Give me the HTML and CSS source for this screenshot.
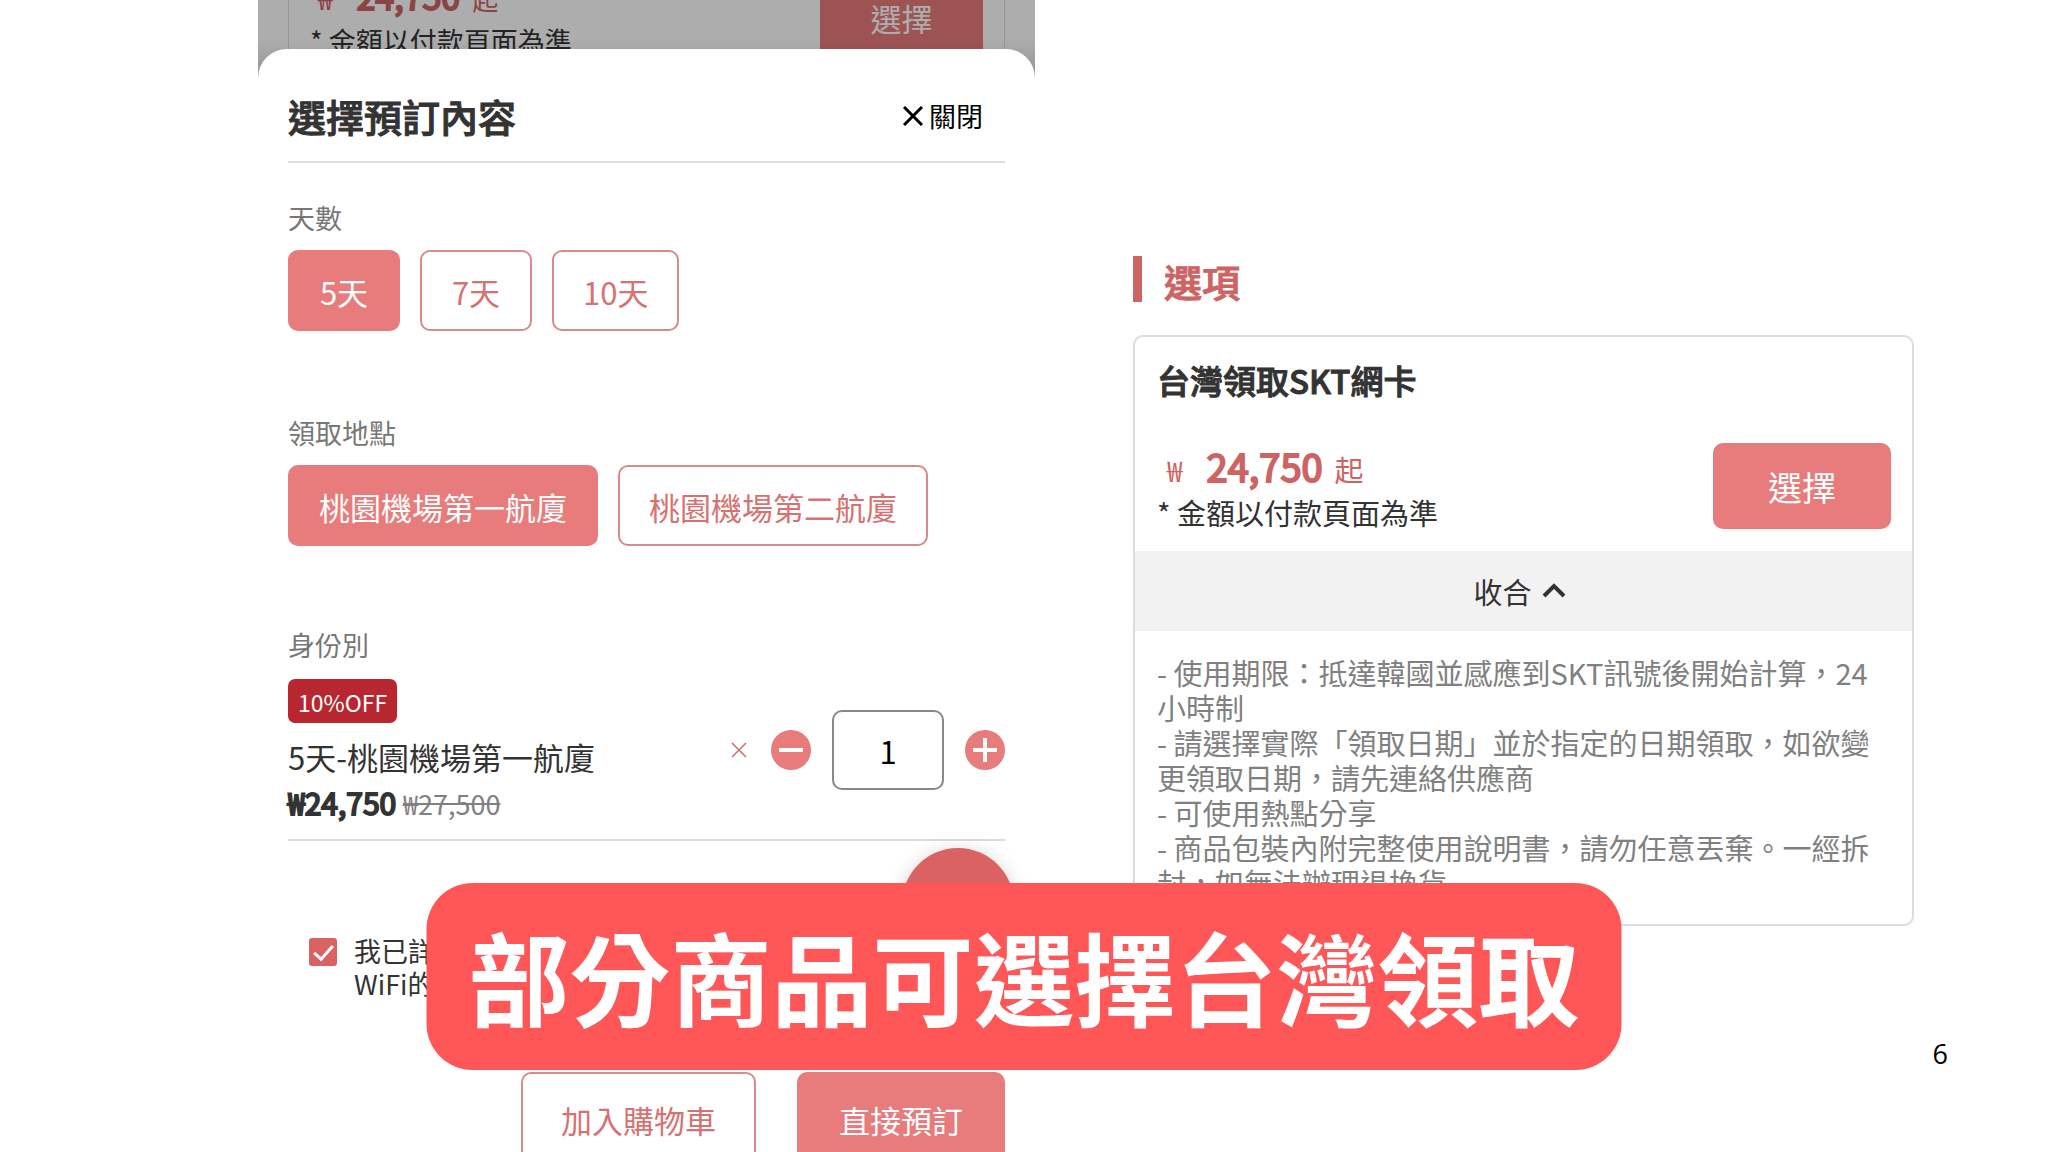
FILE: index.html
```html
<!DOCTYPE html>
<html lang="zh-Hant">
<head>
    <meta charset="UTF-8">
    <meta name="viewport" content="width=device-width, initial-scale=1.0">
    <title>部分商品可選擇台灣領取</title>
    <link rel="stylesheet" href="styles.css">
</head>
<body>

    <main class="slide">

        <!-- Left: booking sheet -->
        <section class="phone">
            <div class="backdrop">
                <div class="backdrop-card">
                    <div>
                        <p class="price small"><span class="won">₩</span><b>24,750</b><span>起</span></p>
                        <p class="note small">* 金額以付款頁面為準</p>
                    </div>
                    <button class="backdrop-select" type="button">選擇</button>
                </div>
            </div>

            <div class="sheet">
                <header class="sheet-header">
                    <h2>選擇預訂內容</h2>
                    <button class="close" type="button">
                        <svg width="20" height="20" viewBox="0 0 20 20"><path d="M1 1L19 19M19 1L1 19" stroke="#000" stroke-width="3"/></svg>
                        關閉
                    </button>
                </header>

                <div class="group">
                    <h3>天數</h3>
                    <div class="options">
                        <button class="option selected" type="button">5天</button>
                        <button class="option" type="button">7天</button>
                        <button class="option" type="button">10天</button>
                    </div>
                </div>

                <div class="group">
                    <h3>領取地點</h3>
                    <div class="options">
                        <button class="option selected" type="button">桃園機場第一航廈</button>
                        <button class="option" type="button">桃園機場第二航廈</button>
                    </div>
                </div>

                <div class="group products">
                    <h3>身份別</h3>
                    <div class="product">
                        <div>
                            <span class="badge">10%OFF</span>
                            <p class="product-name">5天-桃園機場第一航廈</p>
                            <p class="product-price"><b>₩24,750</b> <del>₩27,500</del></p>
                        </div>
                        <div class="stepper">
                            <svg class="times" width="16" height="16" viewBox="0 0 16 16"><path d="M1 1L15 15M15 1L1 15" stroke="#c87070" stroke-width="1.5"/></svg>
                            <button class="round" type="button" aria-label="減少">
                                <svg width="40" height="40" viewBox="0 0 40 40"><path d="M8 20H32" stroke="#fff" stroke-width="4"/></svg>
                            </button>
                            <input class="quantity" type="text" value="1" aria-label="數量">
                            <button class="round" type="button" aria-label="增加">
                                <svg width="40" height="40" viewBox="0 0 40 40"><path d="M8 20H32M20 8V32" stroke="#fff" stroke-width="4"/></svg>
                            </button>
                        </div>
                    </div>
                </div>

                <div class="agree">
                    <input type="checkbox" id="agree" checked>
                    <label for="agree">我已詳<br>WiFi的</label>
                </div>

                <div class="actions">
                    <button class="action" type="button">加入購物車</button>
                    <button class="action primary" type="button">直接預訂</button>
                </div>

                <div class="fab"></div>
            </div>
        </section>

        <!-- Right: option card -->
        <section class="plans">
            <h2 class="plans-title">選項</h2>
            <article class="card">
                <h3 class="card-title">台灣領取SKT網卡</h3>
                <div class="card-row">
                    <div>
                        <p class="price"><span class="won">₩</span><b>24,750</b><span>起</span></p>
                        <p class="note">* 金額以付款頁面為準</p>
                    </div>
                    <button class="select" type="button">選擇</button>
                </div>
                <button class="toggle" type="button">
                    收合
                    <svg width="24" height="16" viewBox="0 0 24 16"><path d="M2 13L12 3L22 13" fill="none" stroke="#333" stroke-width="4"/></svg>
                </button>
                <p class="details">
                    - 使用期限：抵達韓國並感應到SKT訊號後開始計算，24<br>
                    小時制<br>
                    - 請選擇實際「領取日期」並於指定的日期領取，如欲變<br>
                    更領取日期，請先連絡供應商<br>
                    - 可使用熱點分享<br>
                    - 商品包裝內附完整使用說明書，請勿任意丟棄。一經拆<br>
                    封，如無法辦理退換貨
                </p>
            </article>
        </section>

        <h1 class="banner">部分商品可選擇台灣領取</h1>
        <span class="page-number">6</span>
    </main>

</body>
</html>
```

FILE: styles.css
```css
* {
    box-sizing: border-box;
}
body {
    margin: 0;
    background-color: #fff;
    color: #333;
    font-family: "Noto Sans CJK TC", sans-serif;
}
h1, h2, h3, p {
    margin: 0;
}
button, input {
    margin: 0;
    padding: 0;
    border: none;
    background: none;
    color: inherit;
    font-family: inherit;
}
button {
    cursor: pointer;
    white-space: nowrap;
}
.slide {
    position: relative;
    display: grid;
    grid-template-columns: 258fr 777fr 98fr 781fr 134fr;
    align-items: start;
    height: 100vh;
    overflow: hidden;
}

/* Page behind the sheet */
.phone {
    grid-column: 2;
}
.backdrop {
    position: relative;
    height: 78px;
    padding: 0 30px;
    overflow: hidden;
}
.backdrop::after {
    content: "";
    position: absolute;
    inset: 0;
    background: linear-gradient(rgba(0, 0, 0, 0.32) 50%, rgba(0, 0, 0, 0.42));
}
.backdrop-card {
    display: flex;
    justify-content: space-between;
    align-items: flex-end;
    height: 64px;
    padding: 0 21px;
    border: 1px solid #ddd;
    border-top: none;
}
.backdrop-select {
    width: 163px;
    height: 92px;
    background-color: #e87b7b;
    color: #fff;
    font-size: 31px;
}

/* Prices, shared by both sides */
.price {
    display: flex;
    align-items: baseline;
    padding-left: 10px;
    color: #cd6464;
    font-size: 29px;
    line-height: 46px;
}
.price b {
    margin: 0 12px 0 24px;
    font-size: 38px;
    font-weight: 400;
    -webkit-text-stroke: 2px #cd6464;
}
.price .won {
    font-size: 28px;
}
.note {
    font-size: 29px;
    line-height: 38px;
}
.price.small {
    padding-left: 8px;
    font-size: 26px;
    line-height: 40px;
}
.price.small b {
    font-size: 34px;
}
.price.small .won {
    font-size: 26px;
}
.note.small {
    font-size: 27px;
    line-height: 44px;
}

/* Sheet */
.sheet {
    position: relative;
    margin-top: -29px;
    padding: 0 30px;
    border-radius: 29px 29px 0 0;
    background-color: #fff;
}
.sheet-header {
    display: flex;
    justify-content: space-between;
    align-items: center;
    height: 114px;
    padding: 21px 22px 0 0;
    border-bottom: 2px solid #ddd;
}
.sheet-header h2 {
    font-size: 38px;
    font-weight: 500;
    line-height: 56px;
    -webkit-text-stroke: 1px #333;
}
.close {
    display: flex;
    align-items: center;
    gap: 6px;
    color: #000;
    font-size: 27px;
    line-height: 40px;
}
.group {
    margin-top: 82px;
}
.sheet-header + .group {
    margin-top: 35px;
}
.group h3 {
    margin-bottom: 12px;
    color: #777;
    font-size: 27px;
    font-weight: 400;
    line-height: 40px;
}
.group.products {
    margin-top: 79px;
}
.products h3 {
    margin-bottom: 14px;
}
.options {
    display: flex;
    gap: 20px;
}
.option {
    min-width: 112px;
    height: 81px;
    padding: 2px 29px 0;
    border: 2px solid #d98a8a;
    border-radius: 10px;
    color: #d67272;
    font-size: 31px;
}
.option.selected {
    border-color: #e87b7b;
    background-color: #e87b7b;
    color: #fff;
}

.product {
    display: flex;
    justify-content: space-between;
    align-items: center;
    padding-bottom: 12px;
    border-bottom: 2px solid #ddd;
}
.badge {
    display: block;
    width: fit-content;
    margin-bottom: 12px;
    padding: 2px 10px 0;
    border-radius: 7px;
    background-color: #b8272f;
    color: #fff;
    font-size: 23px;
    line-height: 42px;
}
.product-name {
    font-size: 31px;
    line-height: 44px;
}
.product-price {
    font-size: 30px;
    line-height: 46px;
}
.product-price b {
    font-weight: 400;
    -webkit-text-stroke: 2px #333;
}
.product-price del {
    color: #808080;
    font-size: 27px;
}
.stepper {
    display: flex;
    align-items: center;
    gap: 21px;
    padding-bottom: 6px;
}
.times {
    margin-right: 3px;
}
.round {
    width: 40px;
    height: 40px;
    border-radius: 50%;
    background-color: #e87b7b;
}
.round svg {
    display: block;
}
.quantity {
    width: 112px;
    height: 80px;
    border: 2px solid #888;
    border-radius: 10px;
    color: #000;
    font-size: 31px;
    text-align: center;
}

.agree {
    display: flex;
    gap: 17px;
    margin-top: 93px;
    padding-left: 21px;
}
.agree input {
    appearance: none;
    width: 28px;
    height: 28px;
    margin-top: 4px;
    border-radius: 3px;
    background-color: #da6262;
}
.agree input:checked::before {
    content: "";
    display: block;
    width: 8px;
    height: 16px;
    margin: 3px auto;
    border: solid #fff;
    border-width: 0 3px 3px 0;
    transform: rotate(42deg);
}
.agree label {
    font-size: 27px;
    line-height: 33px;
}
.actions {
    display: flex;
    justify-content: flex-end;
    gap: 41px;
    margin-top: 72px;
}
.action {
    height: 92px;
    padding: 2px 38px 0;
    border: 2px solid #d98a8a;
    border-radius: 10px;
    color: #d67272;
    font-size: 31px;
}
.action.primary {
    padding: 2px 40px 0;
    border-color: #e87b7b;
    background-color: #e87b7b;
    color: #fff;
}
.fab {
    position: absolute;
    top: 799px;
    right: 21px;
    width: 112px;
    height: 112px;
    border-radius: 50%;
    background-color: #da6262;
    box-shadow: 0 4px 20px rgba(0, 0, 0, 0.2);
}

/* Option card */
.plans {
    grid-column: 4;
    padding-top: 256px;
}
.plans-title {
    padding: 3px 0 0 22px;
    border-left: 9px solid #cd6464;
    color: #cd6464;
    font-size: 38px;
    font-weight: 500;
    line-height: 43px;
    -webkit-text-stroke: 1px #cd6464;
}
.card {
    margin-top: 33px;
    border: 2px solid #ddd;
    border-radius: 10px;
    overflow: hidden;
}
.card-title {
    padding: 19px 22px 0;
    font-size: 33px;
    font-weight: 500;
    line-height: 48px;
    -webkit-text-stroke: 1px #333;
}
.card-row {
    display: flex;
    justify-content: space-between;
    align-items: flex-start;
    margin-top: 39px;
    padding: 0 21px 20px 22px;
}
.select {
    width: 178px;
    height: 86px;
    border-radius: 10px;
    background-color: #e87b7b;
    color: #fff;
    font-size: 34px;
}
.toggle {
    display: flex;
    justify-content: center;
    align-items: center;
    gap: 10px;
    width: 100%;
    height: 80px;
    padding-right: 8px;
    background-color: #f2f2f2;
    font-size: 29px;
}
.details {
    padding: 24px 22px;
    color: #808080;
    font-size: 29px;
    line-height: 35px;
    white-space: nowrap;
}

/* Caption over the slide */
.banner {
    position: absolute;
    left: 50%;
    bottom: 82px;
    padding: 20px 42px 23px;
    border-radius: 46px;
    background-color: #ff5757;
    color: #fff;
    font-size: 101px;
    font-weight: 700;
    line-height: 144px;
    white-space: nowrap;
    transform: translateX(-50%);
}
.page-number {
    position: absolute;
    right: 100px;
    bottom: 78px;
    color: #000;
    font-family: "Open Sans", sans-serif;
    font-size: 27px;
    line-height: 40px;
}
```
